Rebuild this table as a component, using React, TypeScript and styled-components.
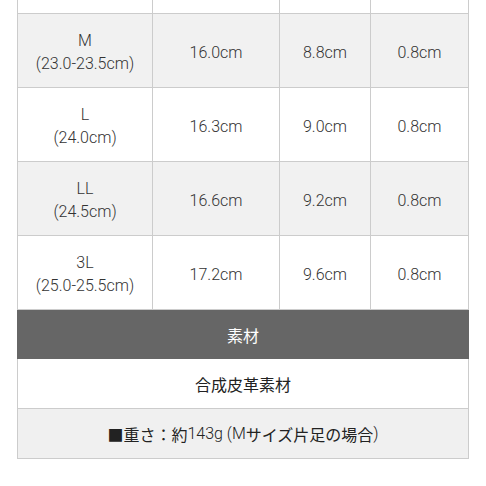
import React from "react";
import styled, { createGlobalStyle } from "styled-components";

const Global = createGlobalStyle`
  html, body { margin: 0; padding: 0; background: #ffffff; }
  body { font-family: Roboto, "Noto Sans CJK JP", sans-serif; }
  * { box-sizing: border-box; }
`;

const Page = styled.div`
  width: 486px;
  height: 486px;
  overflow: hidden;
  background: #ffffff;
  padding: 0 17px;
`;

const Table = styled.div`
  width: 452px;
  border-left: 1px solid #cccccc;
  border-right: 1px solid #cccccc;
  display: flex;
  flex-direction: column;
`;

const SizeRow = styled.div<{ $shaded: boolean; $height?: number }>`
  display: grid;
  grid-template-columns: 135px 127px 91px 97px;
  height: ${(p) => p.$height ?? 74}px;
  border-bottom: 1px solid #cccccc;
  background: ${(p) => (p.$shaded ? "#f1f1f1" : "#ffffff")};
`;

const Cell = styled.div<{ $last?: boolean }>`
  display: flex;
  flex-direction: column;
  align-items: center;
  justify-content: center;
  padding-top: 3px;
  border-right: ${(p) => (p.$last ? "none" : "1px solid #cccccc")};
  font-size: 16px;
  font-weight: 300;
  line-height: 23px;
  color: #333333;
  text-align: center;
`;

const HeaderRow = styled.div`
  height: 49px;
  margin: 0 -1px;
  background: #666666;
  color: #ffffff;
  font-size: 16px;
  display: flex;
  align-items: center;
  justify-content: center;
`;

const InfoRow = styled.div<{ $shaded: boolean }>`
  height: 50px;
  border-bottom: 1px solid #cccccc;
  background: ${(p) => (p.$shaded ? "#f0f0f0" : "#ffffff")};
  color: #222222;
  font-size: 16px;
  display: flex;
  align-items: center;
  justify-content: center;
  white-space: pre;
`;

const Latin = styled.span`
  font-family: Roboto, sans-serif;
  font-weight: 300;
`;

type Size = { name: string; range: string; a: string; b: string; c: string };

const sizes: Size[] = [
  { name: "M", range: "(23.0-23.5cm)", a: "16.0cm", b: "8.8cm", c: "0.8cm" },
  { name: "L", range: "(24.0cm)", a: "16.3cm", b: "9.0cm", c: "0.8cm" },
  { name: "LL", range: "(24.5cm)", a: "16.6cm", b: "9.2cm", c: "0.8cm" },
  { name: "3L", range: "(25.0-25.5cm)", a: "17.2cm", b: "9.6cm", c: "0.8cm" },
];

export default function App() {
  return (
    <>
      <Global />
      <Page>
        <Table>
          <SizeRow $shaded={false} $height={14}>
            <Cell />
            <Cell />
            <Cell />
            <Cell $last />
          </SizeRow>
          {sizes.map((s, i) => (
            <SizeRow key={s.name} $shaded={i % 2 === 0}>
              <Cell>
                <span>{s.name}</span>
                <span>{s.range}</span>
              </Cell>
              <Cell>{s.a}</Cell>
              <Cell>{s.b}</Cell>
              <Cell $last>{s.c}</Cell>
            </SizeRow>
          ))}
          <HeaderRow>素材</HeaderRow>
          <InfoRow $shaded={false}>合成皮革素材</InfoRow>
          <InfoRow $shaded={true}>
            ■重さ：約<Latin>143g (M</Latin>サイズ片足の場合<Latin>)</Latin>
          </InfoRow>
        </Table>
      </Page>
    </>
  );
}
